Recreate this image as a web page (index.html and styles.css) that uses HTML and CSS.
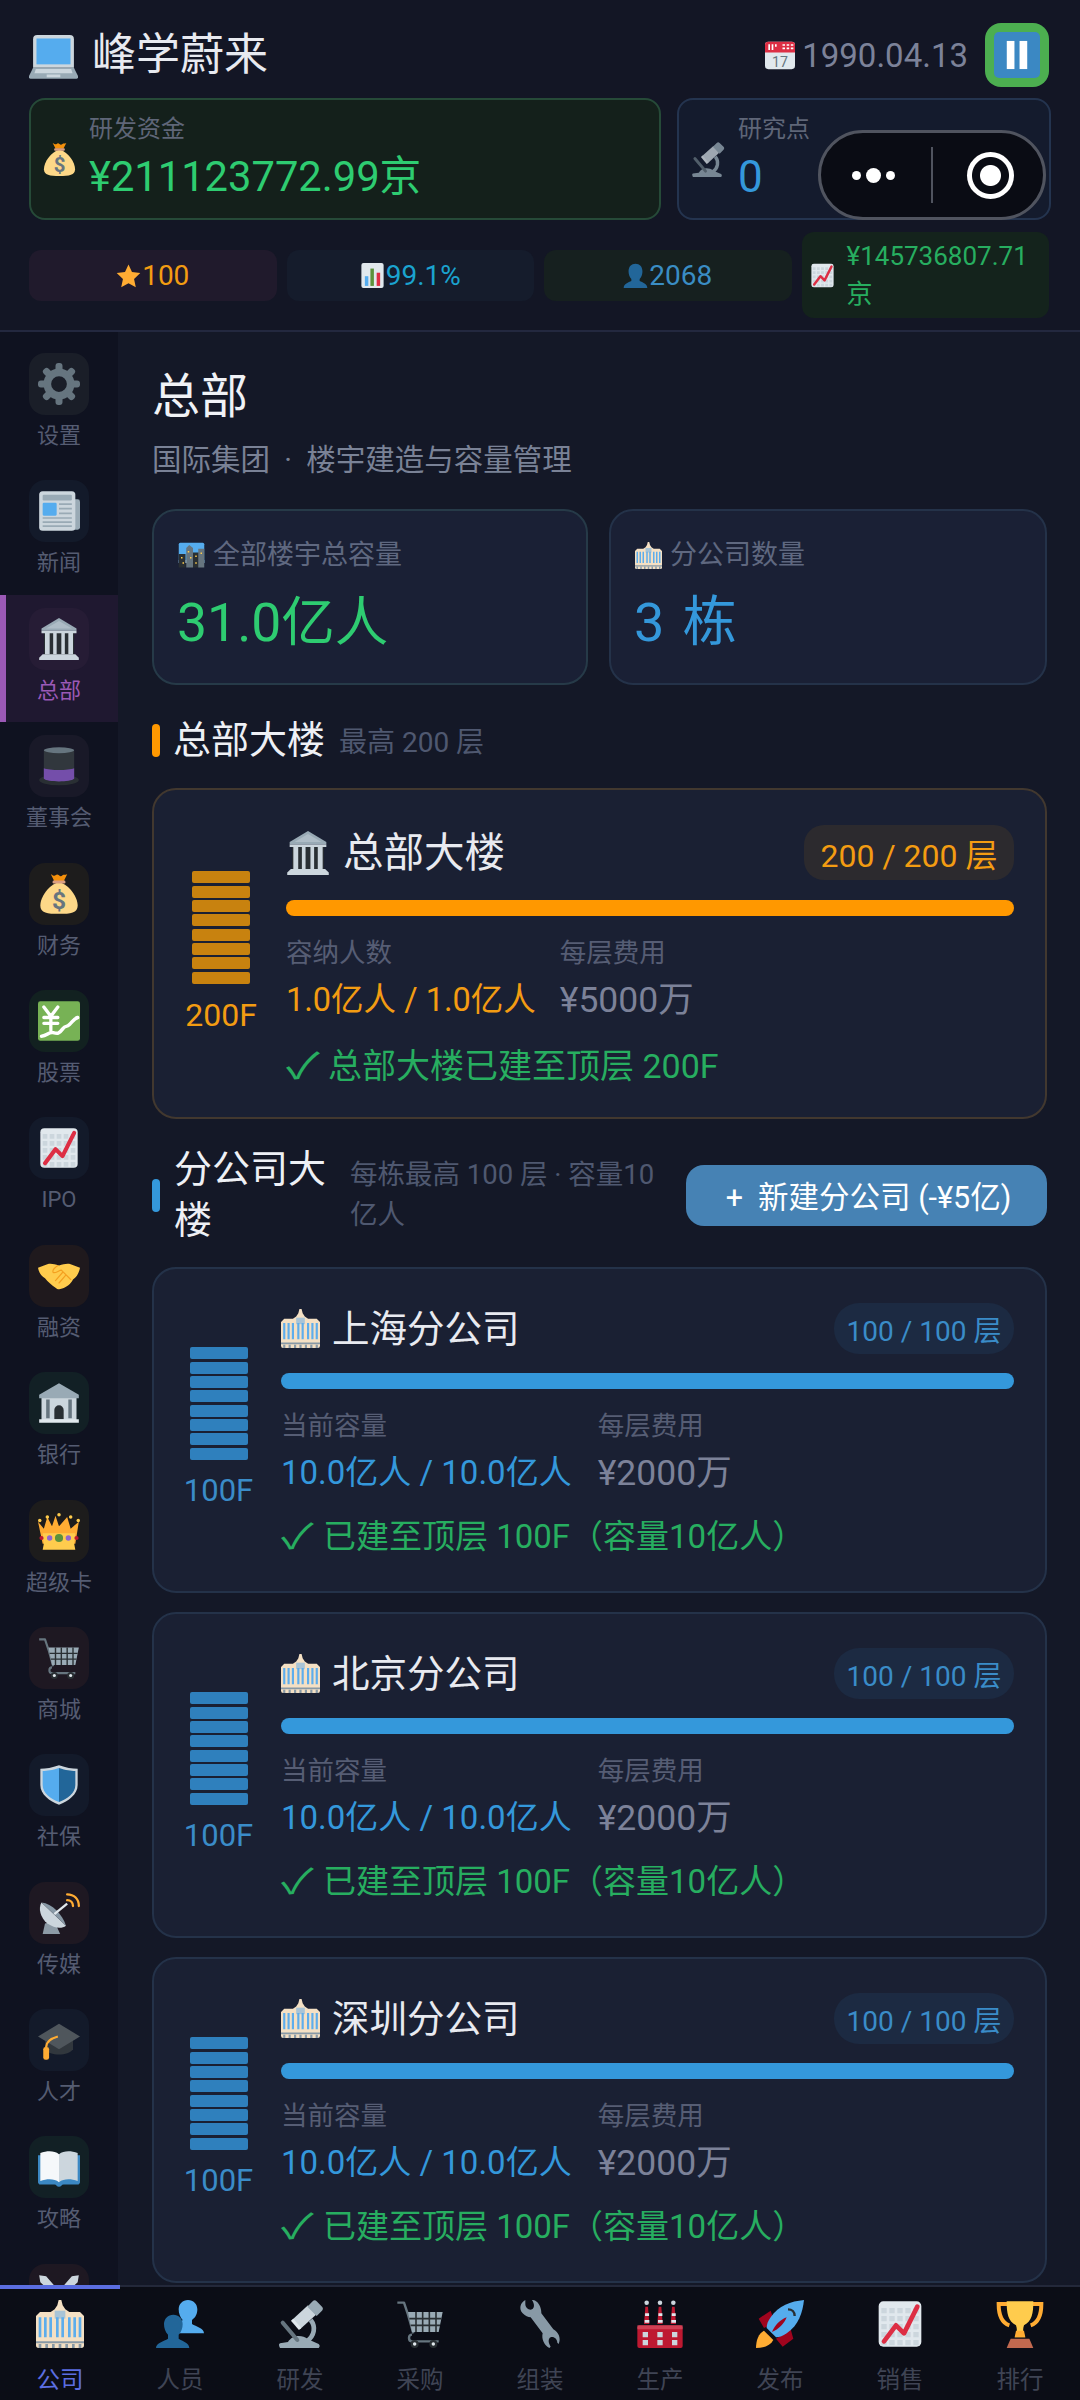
FILE: index.html
```html
<!DOCTYPE html>
<html lang="zh-CN">
<head>
<meta charset="utf-8">
<title>峰学蔚来</title>
<link rel="stylesheet" href="styles.css">
</head>
<body>
<svg class="defs" aria-hidden="true">
<symbol id="laptop" viewBox="0 0 36 36"><path fill="#CCD6DD" d="M6 3h24a3 3 0 0 1 3 3v21H3V6a3 3 0 0 1 3-3z"/><rect fill="#55ACEE" x="5.5" y="5.5" width="25" height="19"/><path fill="#99AAB5" d="M3 27h30l3 6v1a1 1 0 0 1-1 1H1a1 1 0 0 1-1-1v-1z"/><path fill="#CCD6DD" d="M5 28h26l1 3H4zM13 32h10v2H13z"/></symbol>
<symbol id="cal" viewBox="0 0 36 36"><rect fill="#E1E8ED" x="0" y="2" width="36" height="33" rx="4"/><path fill="#DD2E44" d="M4 2h28a4 4 0 0 1 4 4v9H0V6a4 4 0 0 1 4-4z"/><path fill="#fff" d="M4 5h2v7H4zM8 5h2v7H8zM12 5h2v3h-2zM21 5h3v2h-3zM26 5h3v2h-3zM31 5h3v2h-3zM21 9h3v2h-3zM26 9h3v2h-3zM31 9h3v2h-3z"/></symbol>
<symbol id="pause" viewBox="0 0 36 36"><rect fill="#3B88C3" width="36" height="36" rx="4"/><rect fill="#fff" x="10" y="7" width="6" height="22"/><rect fill="#fff" x="20" y="7" width="6" height="22"/></symbol>
<symbol id="bag" viewBox="0 0 36 36"><path fill="#FDD888" d="M18 8C9 10 2 21 2 28c0 6 6 7 16 7s16-1 16-7c0-7-7-18-16-20z"/><path fill="#F4900C" d="M11 1c2 1 3 2 4 1s2-1 3 0 2 1 3 0 2 0 4-1l-3 6h-8z"/><rect fill="#D99E82" x="12.500" y="6.500" width="11" height="2.500" rx="1"/></symbol>
<symbol id="scope" viewBox="0 0 36 36"><path fill="#CCD6DD" d="M12 15L24 4l6 7-12 11z"/><path fill="#E1E8ED" d="M13 14l6 7-1.800 1.500-6-7z"/><path fill="#99AAB5" d="M23.500 5l4-4c1-1 2-1 3 0l4 4c1 1 .800 2 0 3l-4 4z"/><path fill="none" stroke="#99AAB5" stroke-width="3.500" d="M26 15c4 5 3 12-3 16"/><path fill="#99AAB5" d="M3 36c-1-2-1-3 0-3.500l6-1c3-5 10-6 15-2l8 3.500c1 1 1 2 0 3z"/><path fill="none" stroke="#66757F" stroke-width="3" stroke-linecap="round" d="M5 17l11 13"/></symbol>
<symbol id="star" viewBox="0 0 36 36"><path fill="#FFAC33" d="M18 2l5 11 12 1.500-9 8.500 2.500 12L18 29l-10.500 6L10 23l-9-8.500L13 13z"/></symbol>
<symbol id="bars" viewBox="0 0 36 36"><rect fill="#E1E8ED" x="2" y="0" width="32" height="36" rx="3"/><rect fill="#55ACEE" x="7" y="19" width="5" height="14"/><rect fill="#5C913B" x="15" y="8" width="5" height="25"/><rect fill="#DD2E44" x="24" y="14" width="5" height="19"/></symbol>
<symbol id="bust" viewBox="0 0 36 36"><path fill="#269" d="M1 36c0-6 7-8 11-10v-3c-3-3-4-7-4-11 0-7 4-11 10-11s10 4 10 11c0 4-1 8-4 11v3c4 2 11 4 11 10z"/></symbol>
<symbol id="chart" viewBox="0 0 36 36"><rect fill="#E1E8ED" x="2" y="1" width="32" height="34" rx="3.500"/><path fill="none" stroke="#CCD6DD" stroke-width="4" stroke-dasharray="4 2" d="M4 8h28M4 14h28M4 20h28M4 26h28M4 32h28"/><path fill="none" stroke="#DD2E44" stroke-width="3.500" stroke-linecap="round" stroke-linejoin="round" d="M6 31l9-12 6 6 10-20"/></symbol>
<symbol id="gear" viewBox="0 0 36 36"><circle cx="18" cy="18" r="10" fill="none" stroke="#66757F" stroke-width="6.500"/><g fill="#66757F"><rect x="15" y="0" width="6" height="8" rx="2.500"/><rect x="15" y="28" width="6" height="8" rx="2.500"/><rect x="0" y="15" width="8" height="6" rx="2.500"/><rect x="28" y="15" width="8" height="6" rx="2.500"/><rect x="15" y="0" width="6" height="8" rx="2.500" transform="rotate(45 18 18)"/><rect x="15" y="28" width="6" height="8" rx="2.500" transform="rotate(45 18 18)"/><rect x="0" y="15" width="8" height="6" rx="2.500" transform="rotate(45 18 18)"/><rect x="28" y="15" width="8" height="6" rx="2.500" transform="rotate(45 18 18)"/></g></symbol>
<symbol id="news" viewBox="0 0 36 36"><rect fill="#99AAB5" x="26" y="8" width="10" height="26" rx="2"/><rect fill="#CCD6DD" x="1" y="1" width="31" height="34" rx="3"/><rect fill="#99AAB5" x="4" y="4" width="25" height="5" rx="1"/><rect fill="#55ACEE" x="4" y="11" width="12" height="11" rx="1"/><path stroke="#99AAB5" stroke-width="1.500" d="M18 12h11M18 16h11M18 20h11M4 24h25M4 27.500h25M4 31h25"/></symbol>
<symbol id="hq" viewBox="0 0 36 36"><path fill="#292F33" d="M5 12h26v20H5z"/><path fill="#99AAB5" d="M18 0L3 9v2h30V9z"/><path fill="#E1E8ED" d="M18 2.500L7 9h22z" opacity=".3"/><path fill="#CCD6DD" d="M3 11h30v2H3zM6 13h4v18H6zM13 13h3v18h-3zM20 13h3v18h-3zM26 13h4v18h-4z"/><path fill="#CCD6DD" d="M4 31h28l3 3v2H1v-2z"/></symbol>
<symbol id="hat" viewBox="0 0 36 36"><ellipse cx="18" cy="30" rx="17" ry="4.500" fill="#292F33"/><path fill="#31373D" d="M5 5c3-2 23-2 26 0v24c-3 3-23 3-26 0z"/><path fill="#744EAA" d="M5 20c5 2 21 2 26 0v9c-3 3-23 3-26 0z"/><ellipse cx="18" cy="4.500" rx="13" ry="2.500" fill="#66757F"/></symbol>
<symbol id="yen" viewBox="0 0 36 36"><rect fill="#77B255" x="0" y="1" width="36" height="34" rx="2"/><path fill="none" stroke="#fff" stroke-width="2.800" stroke-linecap="round" d="M5 6l6 8 6-8M11 14v12M5 15h12M5 20h12"/><path fill="none" stroke="#fff" stroke-width="3" stroke-linecap="round" stroke-linejoin="round" d="M3 31c5 0 6-4 10-3s5 1 8-3 3-1 6-4 4-5 7-6"/></symbol>
<symbol id="shake" viewBox="0 0 36 36"><path fill="#FFCC4D" d="M0 11l8-3c3-1 6 0 10 1 4-1 7-2 10-1l8 3c-1 5-3 8-6 10-2 4-6 7-10 8-2 1-4 0-5-1-3-2-7-5-9-8-3-2-5-4-6-9z"/><path fill="none" stroke="#F4A020" stroke-width="1" stroke-linecap="round" d="M17 9c-3 2-5 4-4 6 2 1 5-2 7-2l8 8M24 17l-6 7M21 15l-6 7"/></symbol>
<symbol id="bank" viewBox="0 0 36 36"><path fill="#CCD6DD" d="M3 13h30v20H3z"/><path fill="#99AAB5" d="M18 1L1 11v3h34v-3z"/><path fill="#66757F" d="M7 15h3v16H7zM26 15h3v16h-3z"/><path fill="#292F33" d="M14 32v-8a4 4 0 0 1 8 0v8z"/><path fill="#E1E8ED" d="M1 32h34v3H1z"/></symbol>
<symbol id="crown" viewBox="0 0 36 36"><path fill="#FFAC33" d="M4 29h28l3-19-7 6-3-10-7 8-3-9-3 9-4-8-3 10-5-6z"/><path fill="#FFCC4D" d="M4 20h28l-1 9 1 5H4l1-5z"/><circle cx="1.500" cy="9" r="1.500" fill="#FFCC4D"/><circle cx="34.500" cy="9" r="1.500" fill="#FFCC4D"/><circle cx="18" cy="4" r="1.500" fill="#FFCC4D"/><circle cx="8" cy="6" r="1.500" fill="#FFCC4D"/><circle cx="28" cy="6" r="1.500" fill="#FFCC4D"/><circle cx="18" cy="24" r="3.500" fill="#5C913B"/><circle cx="10" cy="24" r="2.300" fill="#9266CC"/><circle cx="26" cy="24" r="2.300" fill="#9266CC"/><circle cx="3" cy="24" r="1.800" fill="#BE1931"/><circle cx="33" cy="24" r="1.800" fill="#BE1931"/></symbol>
<symbol id="cart" viewBox="0 0 36 36"><path fill="none" stroke="#66757F" stroke-width="1.800" stroke-linejoin="round" d="M1 2h5l3 9 4 14M12 26c-3 0-3 5 0 5h20"/><path fill="#99AAB5" d="M9 9h26l-3 15H12z"/><path fill="none" stroke="#292F33" stroke-width="1.200" d="M10 14h24M11 19h22M15 9v15M20 9v15M25 9v15M30 9v15"/><circle cx="14" cy="33" r="3" fill="#292F33"/><circle cx="28" cy="33" r="3" fill="#292F33"/><circle cx="14" cy="33" r="1.300" fill="#E1E8ED"/><circle cx="28" cy="33" r="1.300" fill="#E1E8ED"/></symbol>
<symbol id="shield" viewBox="0 0 36 36"><path fill="#CCD6DD" d="M18 1C12 3 7 4 2 4v14c0 8 8 14 16 17 8-3 16-9 16-17V4c-5 0-10-1-16-3z"/><path fill="#55ACEE" d="M18 3.500C12 5.500 8 6 4 6v12c0 7 7 12 14 14.500z"/><path fill="#226699" d="M18 3.500C24 5.500 28 6 32 6v12c0 7-7 12-14 14.500z"/></symbol>
<symbol id="dish" viewBox="0 0 36 36"><path fill="#99AAB5" d="M6 27l8-2 5 11H4z" opacity=".9"/><path fill="#CCD6DD" d="M3 9c-3 5-1 13 5 18 6 4 12 5 16 2z"/><path fill="#8899A6" d="M3 9l21 20c-3-10-12-19-21-20z"/><path stroke="#E1E8ED" stroke-width="2" d="M14 19l11-9"/><path fill="none" stroke="#FFAC33" stroke-width="2" stroke-linecap="round" d="M25 7c3 0 5 2 5 5M25 2c6 0 10 4 10 10"/></symbol>
<symbol id="cap" viewBox="0 0 36 36"><path fill="#31373D" d="M6 16v10c4 6 20 6 24 0V16z"/><path fill="#4F565C" d="M18 4l18 11-18 11L0 15z"/><path fill="none" stroke="#FFAC33" stroke-width="2" d="M17 15C10 17 7 20 7 24"/><rect fill="#FFAC33" x="4.500" y="24" width="5" height="11" rx="2"/></symbol>
<symbol id="book" viewBox="0 0 36 36"><path fill="#3B88C3" d="M0 8v23c0 1 1 2 2 2h12c2 0 2 2 4 2s2-2 4-2h12c1 0 2-1 2-2V8z"/><path fill="#F5F8FA" d="M2 6c6-2 12-2 16 1v24c-4-3-10-3-16-1z"/><path fill="#CCD6DD" d="M34 6c-6-2-12-2-16 1v24c4-3 10-3 16-1z"/></symbol>
<symbol id="sword" viewBox="0 0 36 36"><path fill="#CCD6DD" d="M1 1l6 1 22 25-3 3L2 7zM35 1l-6 1L7 27l3 3L34 7z"/></symbol>
<symbol id="city" viewBox="0 0 36 36"><path fill="#55ACEE" d="M3 1h30a2 2 0 0 1 2 2v25H1V3a2 2 0 0 1 2-2z"/><path fill="#BBDDF5" d="M1 24h34v4H1z"/><path fill="#66757F" d="M11 34V8l4-4 5 4v26z"/><path fill="#292F33" d="M1 34V16h9v18zM20 34V14h9v20z"/><path fill="#66757F" d="M27 34V9h8v25z"/><path fill="#FFCC4D" d="M4 20h2v2H4zM6 27h2v2H6zM13 12h2v2h-2zM16 20h2v2h-2zM23 18h2v2h-2zM23 27h2v2h-2zM30 14h2v2h-2z"/></symbol>
<symbol id="dept" viewBox="0 0 36 36"><path fill="#F4E0C4" d="M0 12l3-3h8l3-2 2-3 1-4h2l1 4 2 3 3 2h8l3 3v22a2 2 0 0 1-2 2H2a2 2 0 0 1-2-2z"/><path fill="#A9C4D6" d="M14 8h8v6h-8z"/><path fill="#5DADEC" d="M2 13h2v15H2zM6 13h2v15H6zM10 13h2v15h-2zM15 13h2v15h-2zM19 13h2v15h-2zM24 13h2v15h-2zM28 13h2v15h-2zM32 13h2v15h-2z"/><path fill="#8899A6" d="M0 31h36v1.500H0zM2 33h2v3H2zM7 33h2v3H7zM12 33h2v3h-2zM17 33h2v3h-2zM22 33h2v3h-2zM27 33h2v3h-2zM32 33h2v3h-2z"/></symbol>
<symbol id="busts" viewBox="0 0 36 36"><path fill="#55ACEE" d="M11 25h25c0-4-6-5-9-7v-3c3-2 4-5 4-8 0-4-3-7-7-7s-7 3-7 7c0 3 1 6 3 8z"/><path fill="#269" d="M0 36c0-4 6-5 9-7v-3c-2-2-3-5-3-8 0-4 3-7 7-7s7 3 7 7c0 3-1 6-3 8v3c3 2 8 3 8 7z"/></symbol>
<symbol id="wrench" viewBox="0 0 36 36"><path fill="#8899A6" d="M7 0C3 2 2 7 5 10c2 2 4 3 6 3l9 12c-1 4 1 9 5 11l1-1c-2-3-2-6 0-7 2-1 5 1 5 4l1 1c2-4 0-9-4-11l-9-12c0-3-1-7-4-9-1-1-2-1-3-1 2 3 2 6 0 7s-5-1-5-4z"/></symbol>
<symbol id="factory" viewBox="0 0 36 36"><rect fill="#BE1931" x="1" y="19" width="34" height="17" rx="1.500"/><path fill="#DD5A6C" d="M1 19h34v3H1z" opacity=".6"/><path fill="#BE1931" d="M6 18l1-13h2l1 13zM16 18l1-13h2l1 13zM26 18l1-13h2l1 13z"/><path fill="#E1E8ED" d="M6.500 15h3.500v2H6.500zM6.800 10h3v2h-3zM16.500 15h3.500v2h-3.500zM16.800 10h3v2h-3zM26.500 15h3.500v2h-3.500zM26.800 10h3v2h-3z"/><circle cx="8" cy="2" r="1.700" fill="#CCD6DD"/><circle cx="18" cy="2" r="1.700" fill="#CCD6DD"/><circle cx="28" cy="2" r="1.700" fill="#CCD6DD"/><path fill="#CCD6DD" d="M5 24h4v4H5zM16 24h4v4h-4zM27 24h4v4h-4zM5 30h4v4H5zM16 30h4v4h-4zM27 30h4v4h-4z"/></symbol>
<symbol id="rocket" viewBox="0 0 36 36"><path fill="#A0041E" d="M2 14l9-6 3 9-8 4zM20 35l-5-6 11-7 2 7z"/><path fill="#FFAC33" d="M0 36c0-6 2-11 6-13l7 7c-2 4-7 6-13 6z"/><path fill="#55ACEE" d="M36 0C26 1 17 4 11 13c-2 3-3 5-3 8l7 7c3 0 5-1 8-3C32 19 35 9 36 0z"/><path fill="#A0041E" d="M12 24c2-5 6-9 11-11-2 5-6 9-11 11z"/><path fill="none" stroke="#292F33" stroke-width="1.800" d="M24 7c3 0 5 2 5 5"/></symbol>
<symbol id="trophy" viewBox="0 0 36 36"><path fill="none" stroke="#FFAC33" stroke-width="3" d="M9 3H2c0 8 2 14 8 16M27 3h7c0 8-2 14-8 16"/><path fill="#FFCC4D" d="M8 1h20c0 9-1 15-7 18-1 3-1 6 1 9h-8c2-3 2-6 1-9C9 16 8 10 8 1z"/><path fill="#FFAC33" d="M14 28h8l-1-5h-6z"/><path fill="#C1694F" d="M11 29h14l3 7H8z"/></symbol>
</svg>

<div class="app">
  <header class="top">
    <div class="title-row">
      <div class="brand"><svg class="ic-laptop"><use href="#laptop"/></svg><span class="brand-name">峰学蔚来</span></div>
      <div class="clock">
        <svg class="ic-cal" viewBox="0 0 36 36"><use href="#cal"/><text class="svg-t" x="18" y="32" font-size="17" fill="#66757F" text-anchor="middle">17</text></svg><span class="date">1990.04.13</span>
        <div class="pause"><svg class="ic-pause"><use href="#pause"/></svg></div>
      </div>
    </div>
    <div class="res-row">
      <div class="res res-money">
        <svg class="ic-res" viewBox="0 0 36 36"><use href="#bag"/><text class="svg-t" x="18" y="31" font-size="21" font-weight="700" fill="#67757F" text-anchor="middle">$</text></svg>
        <div class="res-text"><div class="res-label">研发资金</div><div class="res-value funds green">¥211123772.99京</div></div>
      </div>
      <div class="res res-sci">
        <svg class="ic-res dim"><use href="#scope"/></svg>
        <div class="res-text"><div class="res-label">研究点</div><div class="res-value blue">0</div></div>
      </div>
      <div class="capsule">
        <div class="cap-dots"><i class="dot-s"></i><i class="dot-l"></i><i class="dot-s"></i></div>
        <div class="cap-div"></div>
        <div class="cap-rec"><i></i></div>
      </div>
    </div>
    <div class="chip-row">
      <div class="chip chip-star"><svg class="ic-chip"><use href="#star"/></svg>100</div>
      <div class="chip chip-bar"><svg class="ic-chip"><use href="#bars"/></svg>99.1%</div>
      <div class="chip chip-bust"><svg class="ic-chip"><use href="#bust"/></svg>2068</div>
      <div class="chip chip-cash"><svg class="ic-chip"><use href="#chart"/></svg><span class="cash-text">¥145736807.71京</span></div>
    </div>
  </header>

  <div class="body">
    <nav class="side">
      <div class="side-item"><div class="side-ic t-gear"><svg><use href="#gear"/></svg></div><span>设置</span></div>
      <div class="side-item"><div class="side-ic t-blue"><svg><use href="#news"/></svg></div><span>新闻</span></div>
      <div class="side-item active"><div class="side-ic t-purple"><svg><use href="#hq"/></svg></div><span>总部</span></div>
      <div class="side-item"><div class="side-ic t-violet"><svg><use href="#hat"/></svg></div><span>董事会</span></div>
      <div class="side-item"><div class="side-ic t-amber"><svg viewBox="0 0 36 36"><use href="#bag"/><text class="svg-t" x="18" y="31" font-size="21" font-weight="700" fill="#67757F" text-anchor="middle">$</text></svg></div><span>财务</span></div>
      <div class="side-item"><div class="side-ic t-green"><svg><use href="#yen"/></svg></div><span>股票</span></div>
      <div class="side-item"><div class="side-ic t-blue"><svg><use href="#chart"/></svg></div><span>IPO</span></div>
      <div class="side-item"><div class="side-ic t-brown"><svg><use href="#shake"/></svg></div><span>融资</span></div>
      <div class="side-item"><div class="side-ic t-teal"><svg><use href="#bank"/></svg></div><span>银行</span></div>
      <div class="side-item"><div class="side-ic t-amber"><svg><use href="#crown"/></svg></div><span>超级卡</span></div>
      <div class="side-item"><div class="side-ic t-rose"><svg><use href="#cart"/></svg></div><span>商城</span></div>
      <div class="side-item"><div class="side-ic t-blue"><svg><use href="#shield"/></svg></div><span>社保</span></div>
      <div class="side-item"><div class="side-ic t-rose"><svg><use href="#dish"/></svg></div><span>传媒</span></div>
      <div class="side-item"><div class="side-ic t-blue"><svg><use href="#cap"/></svg></div><span>人才</span></div>
      <div class="side-item"><div class="side-ic t-teal"><svg><use href="#book"/></svg></div><span>攻略</span></div>
      <div class="side-item"><div class="side-ic t-rose"><svg><use href="#sword"/></svg></div></div>
    </nav>

    <main class="main">
      <h1 class="page-title">总部</h1>
      <p class="page-sub">国际集团 · 楼宇建造与容量管理</p>

      <div class="totals">
        <div class="total total-g">
          <div class="total-label"><svg class="ic-total"><use href="#city"/></svg>全部楼宇总容量</div>
          <div class="total-value green">31.0亿人</div>
        </div>
        <div class="total total-b">
          <div class="total-label"><svg class="ic-total"><use href="#dept"/></svg>分公司数量</div>
          <div class="total-value count blue">3 栋</div>
        </div>
      </div>

      <div class="sec sec-hq">
        <i class="sec-bar bar-o"></i>
        <h2 class="sec-title">总部大楼</h2>
        <span class="sec-sub">最高 200 层</span>
      </div>

      <section class="card card-hq">
        <div class="tower tower-o">
          <div class="floors"><i></i><i></i><i></i><i></i><i></i><i></i><i></i><i></i></div>
          <div class="tower-n">200F</div>
        </div>
        <div class="info">
          <div class="info-head">
            <div class="name name-hq"><svg class="ic-hq"><use href="#hq"/></svg>总部大楼</div>
            <div class="badge badge-o">200 / 200 层</div>
          </div>
          <div class="track fill-o"></div>
          <div class="facts">
            <div><div class="fact-l">容纳人数</div><div class="fact-v orange">1.0亿人 / 1.0亿人</div></div>
            <div><div class="fact-l">每层费用</div><div class="fact-v grey">¥5000万</div></div>
          </div>
          <div class="done"><span class="tick">✓</span>总部大楼已建至顶层 200F</div>
        </div>
      </section>

      <div class="sec sec-br">
        <i class="sec-bar bar-b"></i>
        <h2 class="sec-title wrap">分公司大楼</h2>
        <span class="sec-sub wrap">每栋最高 100 层 · 容量10亿人</span>
        <div class="add">+&nbsp; 新建分公司 (-¥5亿)</div>
      </div>

      <section class="card card-br">
        <div class="tower tower-b">
          <div class="floors"><i></i><i></i><i></i><i></i><i></i><i></i><i></i><i></i></div>
          <div class="tower-n">100F</div>
        </div>
        <div class="info">
          <div class="info-head">
            <div class="name"><svg class="ic-br"><use href="#dept"/></svg>上海分公司</div>
            <div class="badge badge-b">100 / 100 层</div>
          </div>
          <div class="track fill-b"></div>
          <div class="facts">
            <div><div class="fact-l">当前容量</div><div class="fact-v blue">10.0亿人 / 10.0亿人</div></div>
            <div><div class="fact-l">每层费用</div><div class="fact-v grey">¥2000万</div></div>
          </div>
          <div class="done"><span class="tick">✓</span>已建至顶层 100F（容量10亿人）</div>
        </div>
      </section>

      <section class="card card-br">
        <div class="tower tower-b">
          <div class="floors"><i></i><i></i><i></i><i></i><i></i><i></i><i></i><i></i></div>
          <div class="tower-n">100F</div>
        </div>
        <div class="info">
          <div class="info-head">
            <div class="name"><svg class="ic-br"><use href="#dept"/></svg>北京分公司</div>
            <div class="badge badge-b">100 / 100 层</div>
          </div>
          <div class="track fill-b"></div>
          <div class="facts">
            <div><div class="fact-l">当前容量</div><div class="fact-v blue">10.0亿人 / 10.0亿人</div></div>
            <div><div class="fact-l">每层费用</div><div class="fact-v grey">¥2000万</div></div>
          </div>
          <div class="done"><span class="tick">✓</span>已建至顶层 100F（容量10亿人）</div>
        </div>
      </section>

      <section class="card card-br">
        <div class="tower tower-b">
          <div class="floors"><i></i><i></i><i></i><i></i><i></i><i></i><i></i><i></i></div>
          <div class="tower-n">100F</div>
        </div>
        <div class="info">
          <div class="info-head">
            <div class="name"><svg class="ic-br"><use href="#dept"/></svg>深圳分公司</div>
            <div class="badge badge-b">100 / 100 层</div>
          </div>
          <div class="track fill-b"></div>
          <div class="facts">
            <div><div class="fact-l">当前容量</div><div class="fact-v blue">10.0亿人 / 10.0亿人</div></div>
            <div><div class="fact-l">每层费用</div><div class="fact-v grey">¥2000万</div></div>
          </div>
          <div class="done"><span class="tick">✓</span>已建至顶层 100F（容量10亿人）</div>
        </div>
      </section>
    </main>
  </div>

  <footer class="tabs">
    <div class="tab active"><svg><use href="#dept"/></svg><span>公司</span></div>
    <div class="tab"><svg><use href="#busts"/></svg><span>人员</span></div>
    <div class="tab"><svg><use href="#scope"/></svg><span>研发</span></div>
    <div class="tab"><svg><use href="#cart"/></svg><span>采购</span></div>
    <div class="tab"><svg><use href="#wrench"/></svg><span>组装</span></div>
    <div class="tab"><svg><use href="#factory"/></svg><span>生产</span></div>
    <div class="tab"><svg><use href="#rocket"/></svg><span>发布</span></div>
    <div class="tab"><svg><use href="#chart"/></svg><span>销售</span></div>
    <div class="tab"><svg><use href="#trophy"/></svg><span>排行</span></div>
  </footer>
</div>
</body>
</html>
```

FILE: styles.css
```css
* { box-sizing: border-box; margin: 0; padding: 0; }
html, body { width: 1080px; height: 2400px; overflow: hidden; background: #141827; }
body { font-family: Roboto, "Noto Sans CJK SC", sans-serif; font-weight: 400; }
i { display: block; font-style: normal; }
.defs { position: absolute; width: 0; height: 0; }
.svg-t { font-family: Roboto, sans-serif; }

.green { color: #2ecc71; }
.blue { color: #3498db; }
.orange { color: #f39c12; }
.grey { color: #7c8299; }

.app { width: 1080px; height: 2400px; display: flex; flex-direction: column; overflow: hidden; }

/* header */
.top { flex: none; height: 332px; padding: 23px 29px 0; background: #131625; border-bottom: 2px solid #23283f; }
.title-row { display: flex; justify-content: space-between; align-items: center; height: 64px; margin-right: 2px; }
.brand { display: flex; align-items: center; gap: 14px; }
.ic-laptop { width: 49px; height: 49px; }
.brand-name { font-size: 44px; line-height: 56px; color: #e8eaf0; }
.clock { display: flex; align-items: center; }
.ic-cal { width: 30px; height: 30px; margin-right: 7px; }
.date { font-size: 33px; color: #7c8299; margin-right: 17px; }
.pause { width: 64px; height: 64px; border-radius: 16px; background: #4caf50; display: flex; align-items: center; justify-content: center; }
.ic-pause { width: 46px; height: 46px; }

.res-row { position: relative; display: grid; grid-template-columns: 632fr 374fr; gap: 16px; margin-top: 11px; height: 122px; }
.res { display: flex; align-items: center; gap: 12px; padding-left: 11px; border-radius: 16px; border: 2px solid; }
.res-money { background: #14201b; border-color: #264a38; }
.res-sci { background: #141b2d; border-color: #24344f; }
.res-sci .res-text { margin-left: 1px; }
.ic-res { width: 35px; height: 37px; flex: none; }
.ic-res.dim { opacity: .75; }
.res-text { padding-bottom: 2px; }
.res-label { font-size: 24px; line-height: 34px; margin-bottom: 4px; color: #5f6678; }
.res-value { font-size: 44px; line-height: 54px; }
.res-value.funds { font-size: 41.700px; }

.capsule { position: absolute; left: 789px; top: 32px; width: 228px; height: 90px; display: flex; align-items: center; background: #0a0c14; border: 3px solid #50545f; border-radius: 45px; }
.cap-dots { width: 110px; padding-right: 6px; display: flex; align-items: center; justify-content: center; gap: 5px; }
.dot-s { width: 9px; height: 9px; border-radius: 50%; background: #fff; }
.dot-l { width: 15px; height: 15px; border-radius: 50%; background: #fff; }
.cap-div { width: 2px; height: 56px; background: #50545f; }
.cap-rec { flex: 1; padding-left: 4px; display: flex; align-items: center; justify-content: center; }
.cap-rec i { width: 47px; height: 47px; border-radius: 50%; background: radial-gradient(circle, #fff 0 10px, #0a0c14 11px 18px, #fff 19px); }

.chip-row { display: grid; grid-template-columns: repeat(4, 1fr); gap: 10px; align-items: center; margin-top: 12px; margin-right: 2px; }
.chip { display: flex; align-items: center; justify-content: center; height: 51px; border-radius: 12px; font-size: 28px; }
.chip-star { background: #201a2c; color: #f39c12; }
.chip-bar { background: #151c2c; color: #1ba3cf; }
.chip-bust { background: #16201f; color: #3a8dc4; }
.chip-cash { height: 86px; background: #14231c; color: #27ae60; font-size: 26px; line-height: 38px; padding: 0 8px; gap: 11px; justify-content: flex-start; }
.ic-chip { width: 25px; height: 25px; flex: none; margin-right: 1px; }
.cash-text { width: 190px; word-break: break-all; }

/* body */
.body { flex: 1; min-height: 0; display: flex; }
.side { flex: none; width: 118px; padding-top: 8px; background: #0f1220; overflow: hidden; }
.side-item { height: 127.4px; padding-top: 13px; display: flex; flex-direction: column; align-items: center; font-size: 22px; line-height: 30px; color: #555c72; }
.side-ic { width: 60px; height: 62px; border-radius: 16px; display: flex; align-items: center; justify-content: center; margin-bottom: 6px; }
.side-ic svg { width: 42px; height: 42px; }
.side-item.active { background: #1f1830; box-shadow: inset 6px 0 #9b59b6; color: #9b59b6; }
.t-gear { background: #1a1e28; }
.t-blue { background: #131a2a; }
.t-purple { background: #261c35; }
.t-violet { background: #191928; }
.t-amber { background: #1d1c1c; }
.t-green { background: #122120; }
.t-brown { background: #1f191d; }
.t-teal { background: #122025; }
.t-rose { background: #1e1822; }

.main { flex: 1; min-width: 0; padding: 37px 33px 0 34px; overflow: hidden; }
.page-title { font-size: 48px; line-height: 56px; font-weight: 400; color: #f0f2f6; }
.page-sub { font-size: 29.500px; line-height: 36px; margin-top: 17px; word-spacing: 7px; color: #7a8296; }

.totals { display: grid; grid-template-columns: 436px 1fr; gap: 21px; margin-top: 31px; }
.total { height: 176px; padding: 24px 24px 0; border-radius: 24px; border: 2px solid; background: #1a2035; }
.total-g { border-color: #263a48; }
.total-b { border-color: #243249; }
.total-label { display: flex; align-items: center; gap: 8px; font-size: 27px; line-height: 40px; color: #5f6880; }
.ic-total { width: 27px; height: 27px; }
.total-value { font-size: 53.500px; line-height: 76px; margin-top: 10px; margin-left: -1px; }
.total-value.count { font-size: 54px; word-spacing: 5px; }

.sec { display: flex; align-items: center; }
.sec-hq { margin-top: 30px; height: 50px; }
.sec-br { margin-top: 25px; }
.sec-bar { width: 8px; height: 33px; border-radius: 4px; flex: none; }
.bar-o { background: #ff9800; }
.bar-b { background: #3498db; }
.sec-title { font-size: 38px; line-height: 51px; font-weight: 400; color: #eef0f5; margin-left: 13px; }
.sec-title.wrap { width: 152px; flex: none; margin-left: 14px; }
.sec-sub { font-size: 28px; color: #4f5870; margin-left: 14px; }
.sec-sub.wrap { width: 318px; flex: none; margin-left: 24px; font-size: 27.500px; line-height: 40px; }
.add { flex: none; margin-left: auto; width: 361px; height: 61px; padding-left: 4px; border-radius: 18px; background: #4682b4; color: #fff; font-size: 30.500px; display: flex; align-items: center; justify-content: center; }

.card { display: flex; align-items: center; border-radius: 24px; border: 2px solid; background: #1a2033; }
.card-hq { height: 331px; margin-top: 23px; padding: 35px 31px 0 32px; gap: 30px; border-color: #42382f; }
.card-br { height: 326px; margin-bottom: 19px; padding: 34px 31px 0; gap: 29px; border-color: #243249; }
.sec-br + .card-br { margin-top: 21px; }

.tower { flex: none; display: flex; flex-direction: column; align-items: center; align-self: center; }
.tower-o { width: 70px; color: #f39c12; margin: -35px 0 3px; }
.tower-b { width: 67px; color: #3a8cc8; margin: -34px 0 4px; }
.floors { width: 58px; display: flex; flex-direction: column; gap: 2.400px; }
.floors i { height: 12px; border-radius: 2px; }
.tower-o .floors i { background: #c8820f; }
.tower-b .floors i { background: #2f80bd; }
.tower-n { font-size: 32px; line-height: 36px; margin-top: 13px; }
.tower-b .tower-n { font-size: 31px; }

.info { flex: 1; min-width: 0; align-self: flex-start; }
.info-head { display: flex; align-items: center; justify-content: space-between; }
.name { display: flex; align-items: center; gap: 12px; font-size: 37.500px; line-height: 50px; color: #e8eaf0; }
.name-hq { font-size: 40.500px; gap: 13px; }
.ic-hq { width: 44px; height: 44px; }
.ic-br { width: 39px; height: 39px; }
.badge { display: flex; align-items: center; justify-content: center; }
.badge-o { width: 210px; height: 55px; border-radius: 20px; background: #2c2a2e; color: #f39c12; font-size: 32px; }
.badge-b { width: 180px; height: 51px; border-radius: 25px; background: #1c2a42; color: #3a8cc8; font-size: 28px; }
.track { height: 16px; border-radius: 8px; }
.fill-o { background: #ff9800; margin-top: 20px; }
.fill-b { background: #3498db; margin-top: 19px; }
.facts { display: flex; gap: 26px; margin-top: 20px; }
.card-hq .facts { gap: 24px; }
.fact-l { font-size: 26.500px; line-height: 34px; color: #565d74; }
.fact-v { font-size: 33px; line-height: 44px; margin-top: 8px; }
.fact-v.grey { font-size: 35.500px; }
.card-hq .fact-v.orange { font-size: 32.500px; }
.done { font-size: 33px; line-height: 44px; margin-top: 20px; color: #27ae60; white-space: nowrap; }
.card-hq .done { font-size: 34px; margin-top: 22px; }
.tick { display: inline-block; width: 45px; margin-right: -3px; transform: scale(1.45, 1.05); transform-origin: 0 50%; }

/* tabs */
.tabs { flex: none; height: 115px; display: grid; grid-template-columns: repeat(9, 120px); background: #0b0d16; border-top: 2px solid #23283a; }
.tab { position: relative; display: flex; flex-direction: column; align-items: center; padding-top: 13px; font-size: 23.500px; line-height: 30px; color: #3f4454; }
.tab svg { width: 48px; height: 48px; margin-bottom: 17px; flex: none; }
.tab.active { color: #5b6ee1; }
.tab.active::before { content: ""; position: absolute; left: 0; right: 0; top: -2px; height: 4px; background: #5b6ee1; }
```
